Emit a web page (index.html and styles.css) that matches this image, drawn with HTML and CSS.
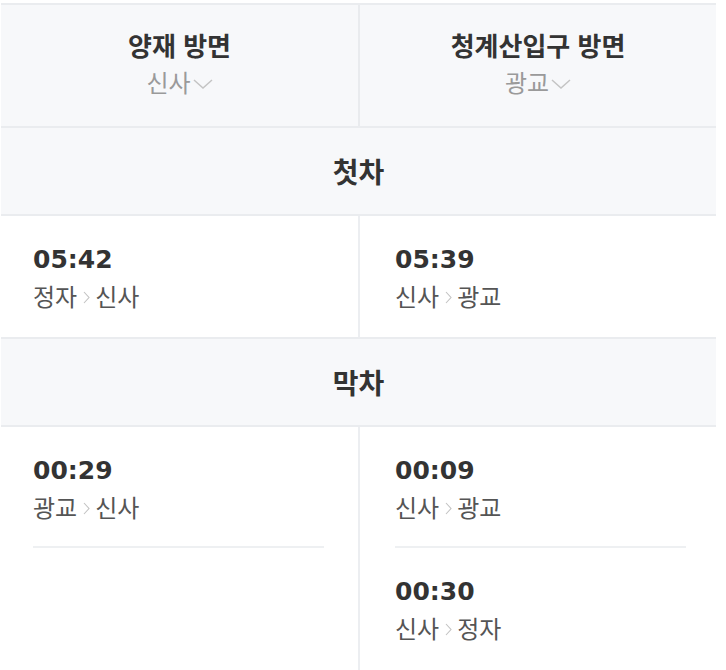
FILE: index.html
```html
<!DOCTYPE html>
<html lang="ko">
<head>
<meta charset="utf-8">
<link rel="stylesheet" href="styles.css">
</head>
<body>
<div class="table">
  <div class="head">
    <div class="head-cell">
      <div class="title">양재 방면</div>
      <div class="sub">신사<svg class="down" width="20" height="10" viewBox="0 0 20 10"><path d="M1 1 L10 9 L19 1" fill="none" stroke="#c4c4c4" stroke-width="1.5"/></svg></div>
    </div>
    <div class="head-cell">
      <div class="title">청계산입구 방면</div>
      <div class="sub">광교<svg class="down" width="20" height="10" viewBox="0 0 20 10"><path d="M1 1 L10 9 L19 1" fill="none" stroke="#c4c4c4" stroke-width="1.5"/></svg></div>
    </div>
  </div>
  <div class="section">첫차</div>
  <div class="row">
    <div class="col left">
      <div class="item">
        <div class="time">05:42</div>
        <div class="route">정자<svg class="arr" width="7" height="13" viewBox="0 0 7 13"><path d="M1 1 L6 6.5 L1 12" fill="none" stroke="#c2c2c2" stroke-width="1.1"/></svg>신사</div>
      </div>
    </div>
    <div class="col right">
      <div class="item">
        <div class="time">05:39</div>
        <div class="route">신사<svg class="arr" width="7" height="13" viewBox="0 0 7 13"><path d="M1 1 L6 6.5 L1 12" fill="none" stroke="#c2c2c2" stroke-width="1.1"/></svg>광교</div>
      </div>
    </div>
  </div>
  <div class="section">막차</div>
  <div class="row last">
    <div class="col left">
      <div class="item sep">
        <div class="time">00:29</div>
        <div class="route">광교<svg class="arr" width="7" height="13" viewBox="0 0 7 13"><path d="M1 1 L6 6.5 L1 12" fill="none" stroke="#c2c2c2" stroke-width="1.1"/></svg>신사</div>
      </div>
    </div>
    <div class="col right">
      <div class="item sep">
        <div class="time">00:09</div>
        <div class="route">신사<svg class="arr" width="7" height="13" viewBox="0 0 7 13"><path d="M1 1 L6 6.5 L1 12" fill="none" stroke="#c2c2c2" stroke-width="1.1"/></svg>광교</div>
      </div>
      <div class="item sep">
        <div class="time">00:30</div>
        <div class="route">신사<svg class="arr" width="7" height="13" viewBox="0 0 7 13"><path d="M1 1 L6 6.5 L1 12" fill="none" stroke="#c2c2c2" stroke-width="1.1"/></svg>정자</div>
      </div>
    </div>
  </div>
</div>
</body>
</html>
```
FILE: styles.css
```css
html, body {
  margin: 0;
  padding: 0;
  background: #fff;
  font-family: "Noto Sans CJK KR", "Noto Sans", sans-serif;
  color: #333;
  height: 670px;
  overflow: hidden;
}
.table {
  width: 715px;
  margin: 3px 0 0 1px;
  border-top: 2px solid #eaecef;
}
.head {
  display: grid;
  grid-template-columns: 357px 356px;
  column-gap: 2px;
  background: #e9ebee;
  border-bottom: 2px solid #eaecef;
}
.head-cell {
  background: #f7f8fa;
  height: 121px;
  display: flex;
  flex-direction: column;
  align-items: center;
  padding-top: 22px;
  box-sizing: border-box;
}
.title {
  font-size: 26px;
  font-weight: 700;
  line-height: 36px;
  color: #333;
}
.sub {
  margin-top: 3px;
  font-size: 24px;
  line-height: 32px;
  color: #9a9a9a;
  display: flex;
  align-items: flex-end;
}
.down {
  margin: 0 0 9px 2px;
}
.section {
  background: #f7f8fa;
  height: 86px;
  display: flex;
  align-items: center;
  justify-content: center;
  font-size: 28px;
  font-weight: 700;
  color: #333;
  border-bottom: 2px solid #eaecef;
}
.row {
  display: grid;
  grid-template-columns: 357px 356px;
  column-gap: 2px;
  background: #eceef1;
  border-bottom: 2px solid #eaecef;
}
.row.last {
  border-bottom: none;
  min-height: 260px;
}
.col {
  background: #fff;
}
.col.left .item {
  margin: 0 34px 0 32px;
}
.col.right .item {
  margin: 0 30px 0 35px;
}
.item {
  padding: 28px 0 0;
  height: 121px;
  box-sizing: border-box;
}
.item.sep {
  border-bottom: 2px solid #eef0f2;
  padding-top: 28px;
}
.col.right .item.sep:last-child {
  border-bottom: none;
}
.time {
  font-family: "DejaVu Sans", "Liberation Sans", sans-serif;
  font-weight: 700;
  font-size: 25px;
  line-height: 32px;
  color: #333;
}
.route {
  margin-top: 4px;
  font-size: 24px;
  line-height: 32px;
  color: #555;
  display: flex;
  align-items: center;
}
.arr {
  margin: 2px 5px 0 6px;
}
```
